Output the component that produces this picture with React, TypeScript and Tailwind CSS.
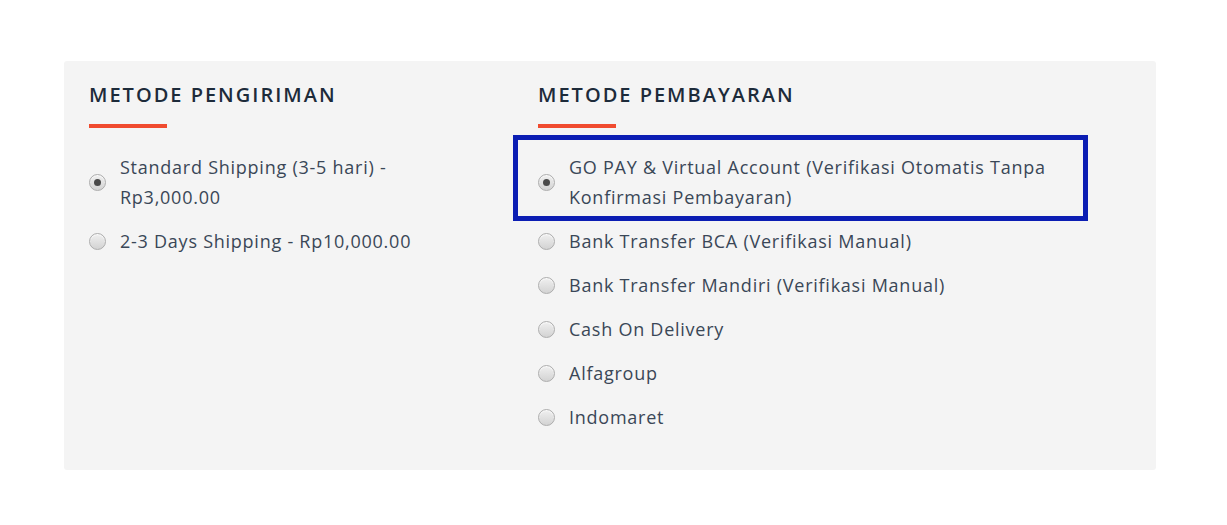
import React from "react";

type Option = { label: string; checked?: boolean; highlight?: boolean };

const shipping: Option[] = [
  { label: "Standard Shipping (3-5 hari) - Rp3,000.00", checked: true },
  { label: "2-3 Days Shipping - Rp10,000.00" },
];

const payment: Option[] = [
  {
    label: "GO PAY & Virtual Account (Verifikasi Otomatis Tanpa Konfirmasi Pembayaran)",
    checked: true,
    highlight: true,
  },
  { label: "Bank Transfer BCA (Verifikasi Manual)" },
  { label: "Bank Transfer Mandiri (Verifikasi Manual)" },
  { label: "Cash On Delivery" },
  { label: "Alfagroup" },
  { label: "Indomaret" },
];

const Radio = ({ checked }: { checked?: boolean }) => (
  <span className="flex size-[17px] shrink-0 items-center justify-center rounded-full border border-[#adadad] bg-gradient-to-b from-[#f0f0f0] to-[#d3d3d3] shadow-[inset_0_1px_1px_rgba(255,255,255,0.8)]">
    {checked && <span className="size-[7px] rounded-full bg-[#4a4a4a]" />}
  </span>
);

const Section = ({ title, options, textWidth }: { title: string; options: Option[]; textWidth: string }) => (
  <div>
    <h2 className="text-[20px] font-semibold leading-[28px] tracking-[2px] text-[#1d2b3a]">{title}</h2>
    <div className="mt-[15px] h-1 w-[78px] bg-[#f04b2f]" />
    <ul className="mt-6 flex flex-col gap-[14px]">
      {options.map((o) => (
        <li key={o.label} className="relative flex items-center gap-[14px]">
          <Radio checked={o.checked} />
          <span className={`${textWidth} text-[18px] leading-[30px] tracking-[0.75px] text-[#3a4757]`}>{o.label}</span>
          {o.highlight && (
            <span className="pointer-events-none absolute left-[-25px] top-[-17px] h-[86px] w-[575px] border-[5px] border-[#0b1db3]" />
          )}
        </li>
      ))}
    </ul>
  </div>
);

const App = () => {
  return (
    <div className="min-h-[525px] bg-white pt-[61px] font-['Open_Sans',sans-serif]">
      <div className="mx-[64px] grid w-[1092px] grid-cols-[449px_1fr] rounded-[3px] bg-[#f4f4f4] pb-[38px] pl-[25px] pt-5">
        <Section title="METODE PENGIRIMAN" options={shipping} textWidth="max-w-[300px]" />
        <Section title="METODE PEMBAYARAN" options={payment} textWidth="max-w-[500px]" />
      </div>
    </div>
  );
};

export default App;
